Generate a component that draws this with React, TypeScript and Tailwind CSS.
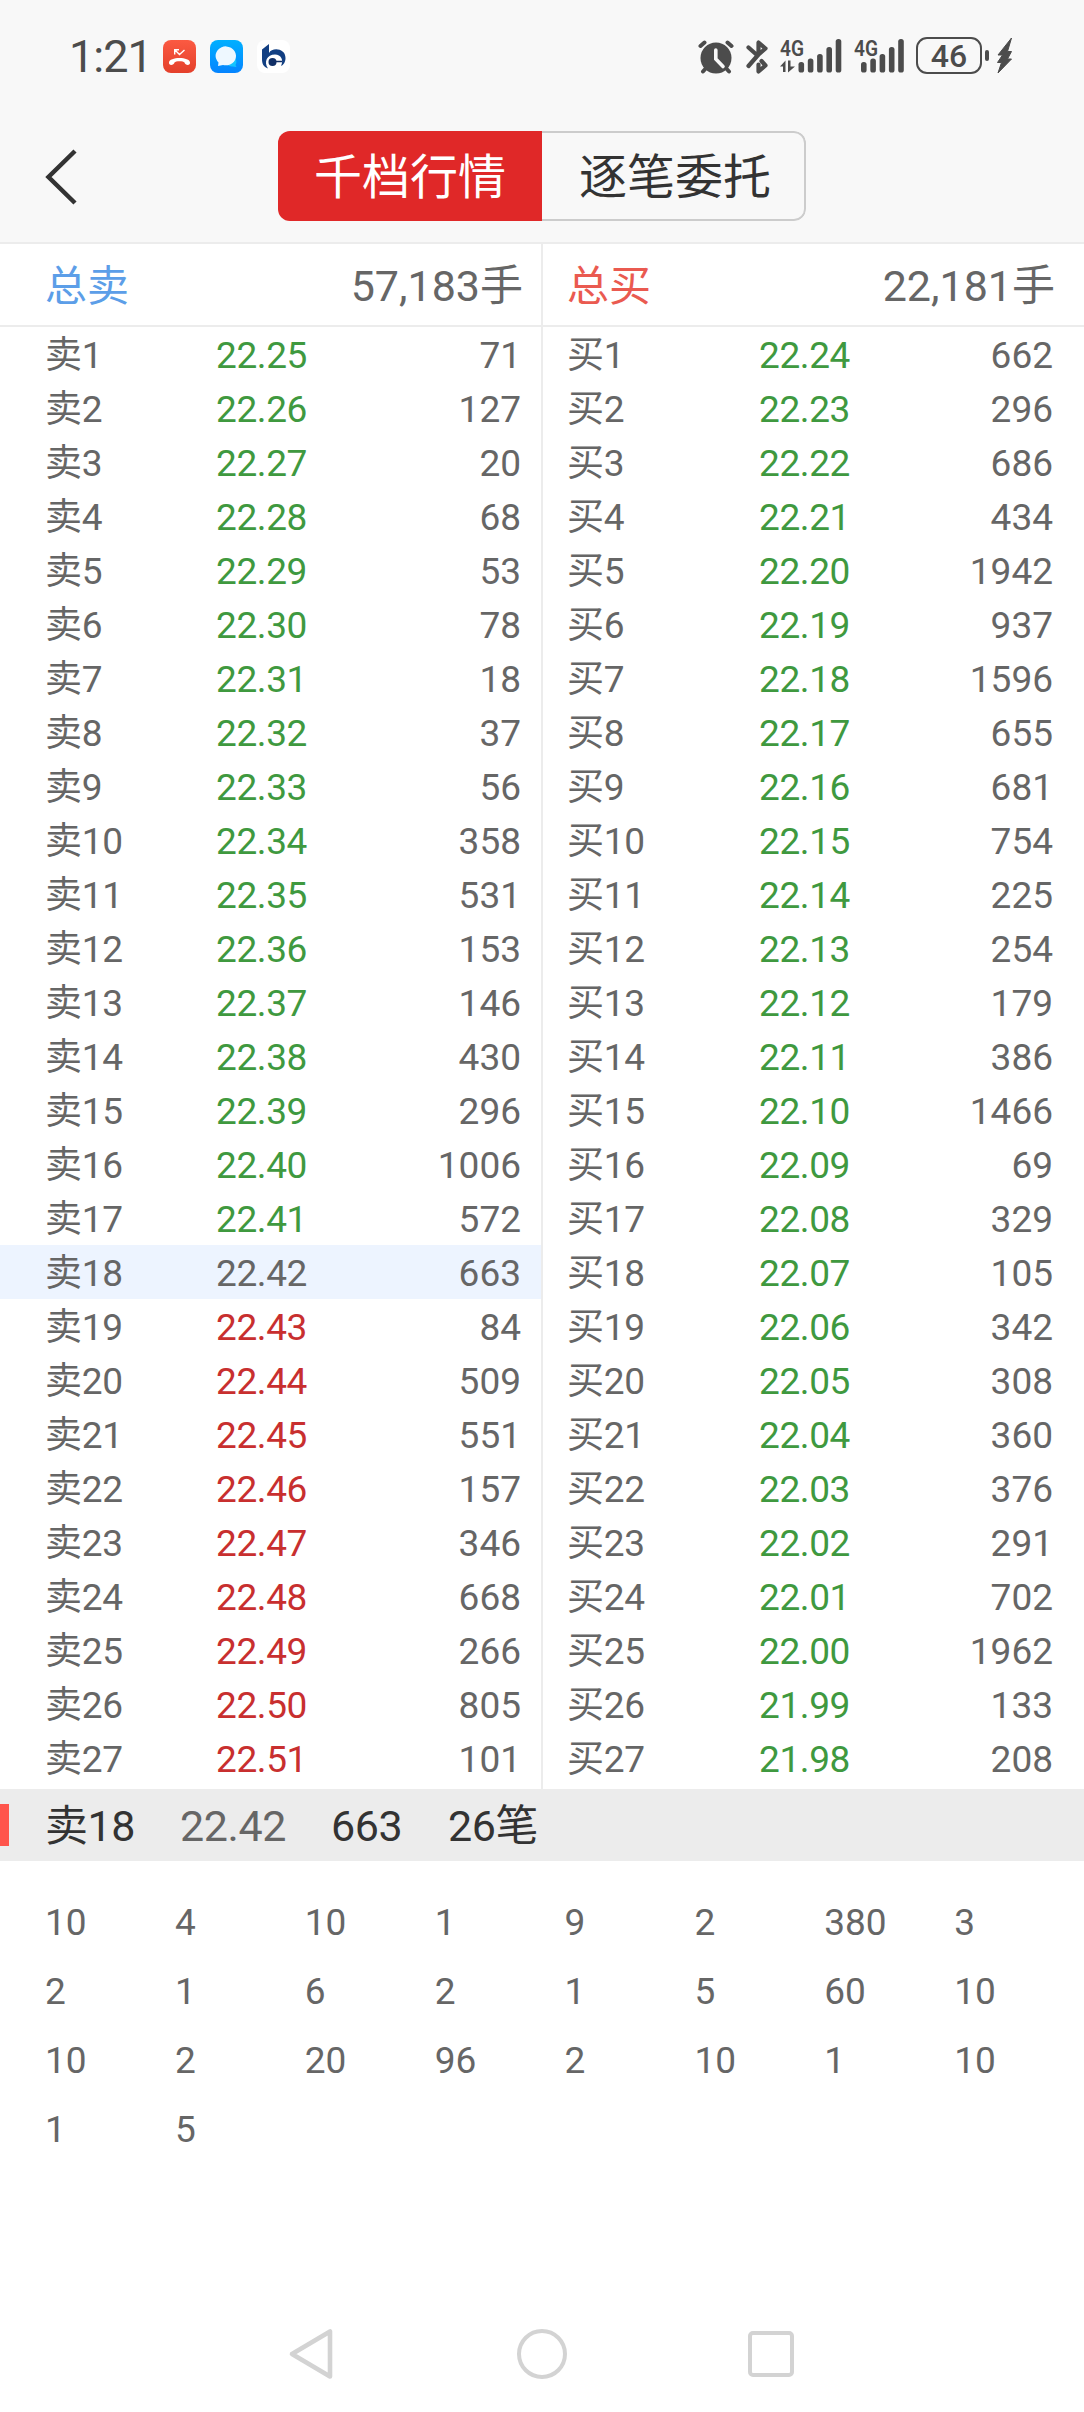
import React from "react";

const sells = [
  ["22.25", 71], ["22.26", 127], ["22.27", 20], ["22.28", 68], ["22.29", 53], ["22.30", 78],
  ["22.31", 18], ["22.32", 37], ["22.33", 56], ["22.34", 358], ["22.35", 531], ["22.36", 153],
  ["22.37", 146], ["22.38", 430], ["22.39", 296], ["22.40", 1006], ["22.41", 572], ["22.42", 663],
  ["22.43", 84], ["22.44", 509], ["22.45", 551], ["22.46", 157], ["22.47", 346], ["22.48", 668],
  ["22.49", 266], ["22.50", 805], ["22.51", 101],
];

const buys = [
  ["22.24", 662], ["22.23", 296], ["22.22", 686], ["22.21", 434], ["22.20", 1942], ["22.19", 937],
  ["22.18", 1596], ["22.17", 655], ["22.16", 681], ["22.15", 754], ["22.14", 225], ["22.13", 254],
  ["22.12", 179], ["22.11", 386], ["22.10", 1466], ["22.09", 69], ["22.08", 329], ["22.07", 105],
  ["22.06", 342], ["22.05", 308], ["22.04", 360], ["22.03", 376], ["22.02", 291], ["22.01", 702],
  ["22.00", 1962], ["21.99", 133], ["21.98", 208],
];

const orders = [
  10, 4, 10, 1, 9, 2, 380, 3, 2, 1, 6, 2, 1, 5, 60, 10, 10, 2, 20, 96, 2, 10, 1, 10, 1, 5,
];

const lastClose = 22.42;

const priceColor = (price: any) => {
  const value = Number(price);
  if (value === lastClose) return "text-[#666666]";
  return value > lastClose ? "text-[#c82f2f]" : "text-[#3f993f]";
};

const Signal = (props: any) => {
  return (
    <svg className={props.className} viewBox={props.viewBox} fill="#4c4c4c">
      <text x="0" y="17.500" fontSize="22" fontWeight="600" textLength="24" lengthAdjust="spacingAndGlyphs">
        4G
      </text>
      {props.data && <path d="M0 28.500 5.500 22.500V34H3V28.500ZM8 22.500H10.500V28.500H15L8 34.500Z" />}
      {[24, 20.5, 16, 9, 1].map((top, i) => (
        <rect key={top} x={props.start + i * 9.3} y={top} width="5.600" height={34.5 - top} rx="2.600" />
      ))}
    </svg>
  );
};

const StatusBar = () => {
  return (
    <div className="flex justify-between h-[113px] pl-[69px] pr-[71px] pt-[37px]">
      <div className="flex h-9 items-center">
        <span className="w-[94px] pt-1 text-[45px] leading-9 tracking-[-1px] text-[#4c4c4c]">1:21</span>
        <svg className="w-[33px] h-[33px] mt-[3px]" viewBox="0 0 33 33">
          <defs>
            <linearGradient id="call" x1="0" y1="0" x2="0" y2="1">
              <stop offset="0" stopColor="#fb5a42" />
              <stop offset="1" stopColor="#e4402b" />
            </linearGradient>
          </defs>
          <rect width="33" height="33" rx="8" fill="url(#call)" />
          <path d="M6 22.500C6 16.500 27 16.500 27 22.500 27.500 26 22 25.500 21.500 22.500 20.500 20.800 12.500 20.800 11.500 22.500 11 25.500 5.500 26 6 22.500Z" fill="#fff" />
          <path d="M11.700 14.500V9.700H16M12 10 16.500 14.500 21.500 10" fill="none" stroke="#fff" strokeWidth="1.400" />
        </svg>
        <svg className="w-[33px] h-[33px] ml-[14px] mt-[3px]" viewBox="0 0 33 33">
          <defs>
            <linearGradient id="msg" x1="0" y1="0" x2="0" y2="1">
              <stop offset="0" stopColor="#00b0ff" />
              <stop offset="1" stopColor="#0584ff" />
            </linearGradient>
          </defs>
          <rect width="33" height="33" rx="8" fill="url(#msg)" />
          <path d="M17 24A6 6 0 0 0 22.500 26.500L26.500 27 25.500 25A6 6 0 0 0 24 17Z" fill="#14c4ff" />
          <path d="M8 26 8.500 22.500A10.200 9.500 0 1 1 13 25Z" fill="#eef8ff" />
        </svg>
        <svg className="w-[33px] h-[33px] ml-[14px] mt-[3px]" viewBox="0 0 33 33">
          <rect width="33" height="33" rx="8" fill="#fff" />
          <path d="M5 9.500 12 4V13C15 7 28.500 8 28.500 18 28.500 22 26.500 25 24 26 27 20 24 14.500 18 14.500 10 14.500 6.500 22 11 28.500 6.500 26.500 5 24 5 19Z" fill="#123f82" />
          <circle cx="15.500" cy="22" r="4" fill="#102f66" />
          <path d="M16 21.500H25" stroke="#102f66" strokeWidth="1.500" />
        </svg>
      </div>
      <div className="flex items-start">
        <svg className="w-9 h-[34px] mt-[3px]" viewBox="0 0 36 34">
          <g stroke="#4c4c4c" strokeWidth="4" strokeLinecap="round">
            <path d="M2.500 6 6.500 2.500M33.500 6 29.500 2.500M9 27 5 31.500M27 27 31 31.500" />
          </g>
          <circle cx="18" cy="18" r="15.500" fill="#4c4c4c" />
          <path d="M17.800 10V19L25 26.500" fill="none" stroke="#f8f8f8" strokeWidth="3.600" strokeLinecap="round" />
        </svg>
        <svg className="w-[22px] h-[34px] ml-3 mt-[3px]" viewBox="0 0 22 34" fill="none" stroke="#4c4c4c" strokeWidth="4.200" strokeLinecap="round" strokeLinejoin="round">
          <path d="M2.500 7.500 11.500 15.500 19.500 8.500 12.500 2.500V14.500L2.500 26" />
          <path d="M15.500 21 19.500 25.500 12.500 31.500V24.500" />
        </svg>
        <Signal className="w-[62px] h-10 ml-3 -mt-[3px]" viewBox="0 -4 62 40" start={18.5} data />
        <Signal className="w-[50px] h-10 ml-[12px] -mt-[3px]" viewBox="0 -4 50 40" start={7} />
        <div className="flex justify-center items-center w-[66px] h-[37px] ml-[12px] rounded-[11px] border-[2.5px] border-[#4c4c4c] text-[32px] font-medium text-[#4c4c4c]">
          46
        </div>
        <div className="w-1 h-[11px] ml-[3px] mt-[13px] rounded-full bg-[#4c4c4c]"></div>
        <svg className="w-[17px] h-[37px] ml-[7px]" viewBox="0 0 17 37" fill="#4c4c4c" stroke="#4c4c4c" strokeLinejoin="round">
          <path d="M15.500 1 2 18H6.500L1.500 25.500H5.500L2 36 15.500 22H11.500L15.500 14.500H11.500Z" />
        </svg>
      </div>
    </div>
  );
};

const Header = () => {
  return (
    <div className="bg-[#f8f8f8] h-[244px] border-b-2 border-[#ececec]">
      <StatusBar />
      <div className="grid grid-cols-[278px_528px] items-center h-[126px]">
        <svg className="w-[34px] h-[58px] ml-[44px] mt-0.5" viewBox="0 0 34 58">
          <path d="M31 3 4.500 29 31 55" fill="none" stroke="#333" strokeWidth="4.500" />
        </svg>
        <div className="flex h-[90px] rounded-xl overflow-hidden text-[48px] text-center">
          <div className="w-1/2 bg-[#e02828] text-white leading-[93px]">千档行情</div>
          <div className="w-1/2 pl-1 rounded-r-xl border-2 border-l-0 border-[#cccccc] text-[#333333] leading-[89px]">
            逐笔委托
          </div>
        </div>
      </div>
    </div>
  );
};

const Column = (props: any) => {
  return (
    <div className={props.className}>
      <div className={`flex justify-between items-center h-[83px] pt-1 border-b-2 border-[#ececec] text-[43px] ${props.padding}`}>
        <span className={`text-[42px] ${props.titleColor}`}>总{props.side}</span>
        <span className="-mr-0.5">{props.total}手</span>
      </div>
      {props.rows.map((row: any, i: number) => (
        <div
          key={row[0]}
          className={`flex items-center h-[54px] pt-[3px] ${props.padding} ${props.active === i ? "bg-[#edf4ff]" : ""}`}
        >
          <span className={`tracking-[-0.3px] ${props.labelWidth}`}>
            {props.side}
            {i + 1}
          </span>
          <span className={`tracking-[-0.4px] ${priceColor(row[0])}`}>{row[0]}</span>
          <span className="ml-auto">{row[1]}</span>
        </div>
      ))}
    </div>
  );
};

const Detail = () => {
  return (
    <div>
      <div className="flex items-center h-[72px] bg-[#ececec] text-[43px] tracking-[-0.4px] text-[#333333]">
        <div className="w-[9px] h-[42px] bg-[#ff554c]"></div>
        <div className="flex pt-[3px] pl-9">
          <span className="w-[135px]">卖18</span>
          <span className="w-[151px] text-[#666666]">22.42</span>
          <span className="w-[117px]">663</span>
          <span>26笔</span>
        </div>
      </div>
      <div className="grid grid-cols-8 pl-[45px] pt-[27px]">
        {orders.map((order, i) => (
          <span key={i} className="leading-[69px]">
            {order}
          </span>
        ))}
      </div>
    </div>
  );
};

const NavBar = () => {
  return (
    <div className="flex justify-between items-center h-[116px] mt-auto pl-[288px] pr-[287px]">
      <svg className="w-[47px] h-[52px]" viewBox="0 0 47 52" fill="none" stroke="#d3d3d3" strokeWidth="4.600" strokeLinejoin="round">
        <path d="M42 3.500V48.500L4 26Z" />
      </svg>
      <div className="w-[50px] h-[50px] ml-px rounded-full border-[4.6px] border-[#d3d3d3]"></div>
      <div className="w-[46px] h-[46px] mr-[3px] rounded-[5px] border-[4.6px] border-[#d3d3d3]"></div>
    </div>
  );
};

const App = () => {
  return (
    <div className="flex flex-col w-[1084px] h-[2412px] bg-white font-['Roboto','Noto_Sans_CJK_SC',sans-serif] text-[37px] leading-none text-[#666666]">
      <Header />
      <div className="flex h-[1545px]">
        <Column
          className="w-[543px] border-r-2 border-[#ececec]"
          padding="pl-[45px] pr-5"
          labelWidth="w-[171px]"
          titleColor="text-[#5c9ee8]"
          side="卖"
          total="57,183"
          rows={sells}
          active={17}
        />
        <Column
          className="w-[541px]"
          padding="pl-6 pr-[31px]"
          labelWidth="w-[192px]"
          titleColor="text-[#ea5a50]"
          side="买"
          total="22,181"
          rows={buys}
        />
      </div>
      <Detail />
      <NavBar />
    </div>
  );
};

export default App;
